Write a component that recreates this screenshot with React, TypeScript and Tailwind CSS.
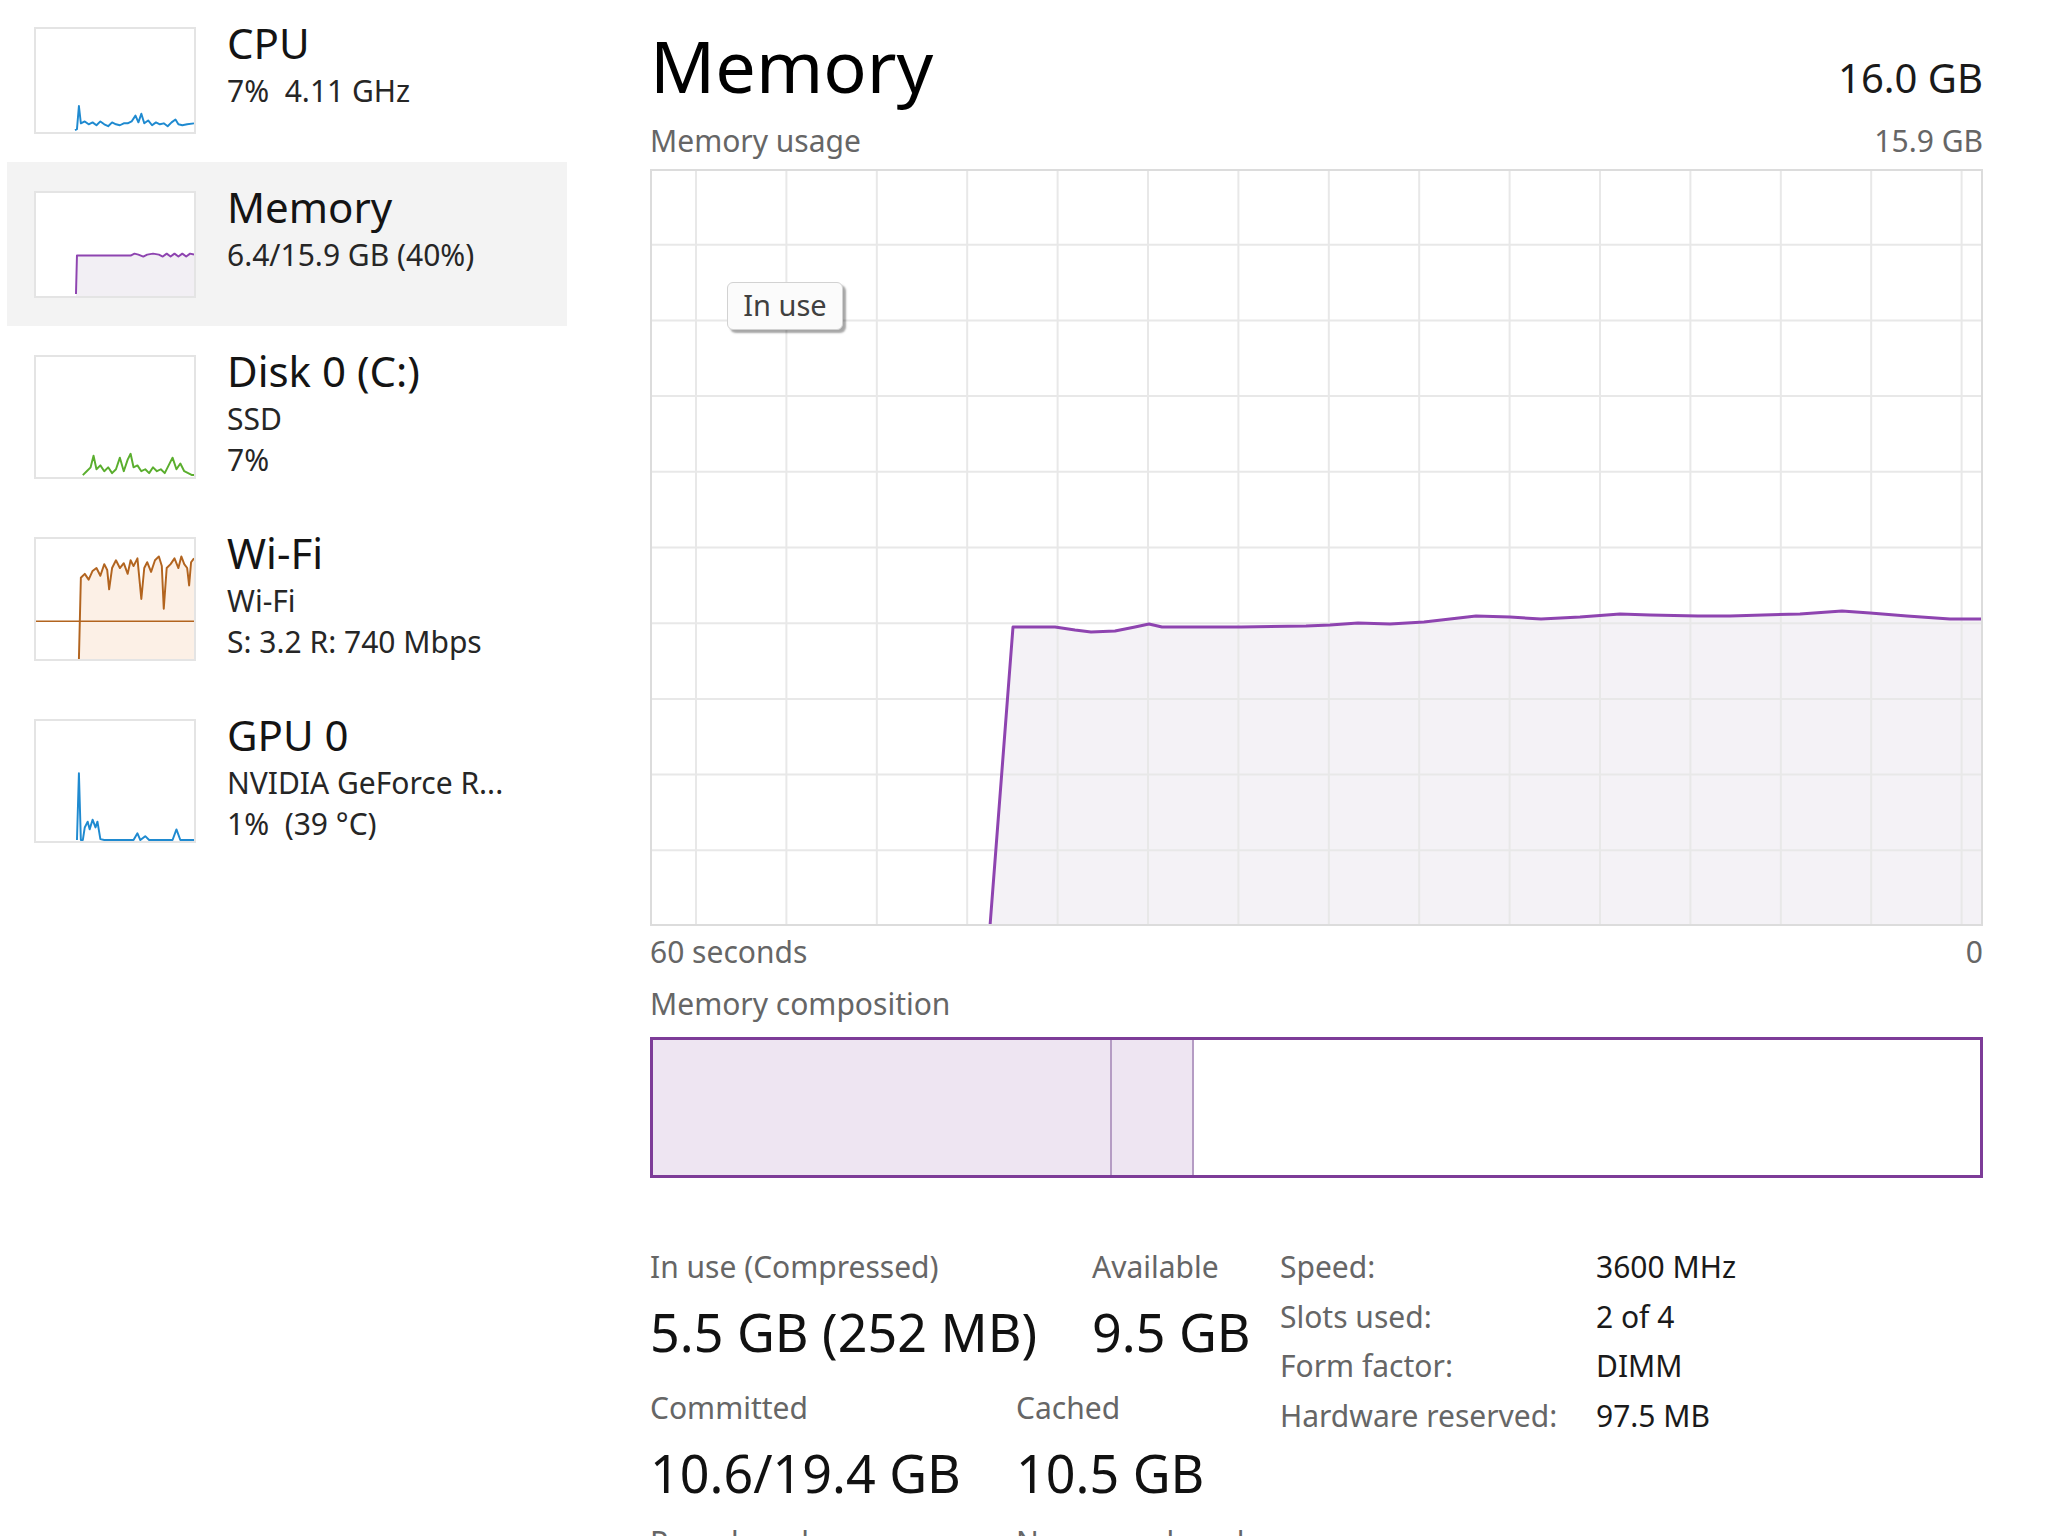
import React from 'react';

type Pt = [number, number];

const cpuPts: Pt[] = [
  [40, 105], [42, 104], [44, 80], [46, 98], [50, 96], [54, 99], [58, 97], [62, 100], [66, 96], [70, 99],
  [74, 101], [78, 97], [82, 99], [86, 100], [90, 98], [94, 98], [98, 96], [102, 90], [105, 97], [108, 88],
  [111, 98], [115, 95], [119, 100], [123, 97], [127, 99], [131, 98], [135, 101], [139, 97], [143, 94],
  [146, 99], [150, 100], [155, 99], [162, 98],
];

const memPts: Pt[] = [
  [41, 105], [42, 65], [97, 65], [101, 63], [105, 64], [110, 66], [114, 64], [120, 63], [126, 64], [130, 66],
  [134, 63], [138, 66], [142, 63], [146, 66], [150, 63], [154, 66], [158, 63], [162, 64],
];

const diskPts: Pt[] = [
  [48, 122], [52, 118], [56, 114], [59, 102], [62, 116], [66, 112], [70, 118], [74, 114], [78, 120], [82, 116],
  [86, 104], [90, 118], [94, 106], [97, 100], [100, 114], [104, 112], [108, 118], [112, 116], [116, 120],
  [120, 114], [124, 118], [128, 116], [132, 120], [136, 112], [140, 104], [144, 116], [148, 110], [152, 118],
  [156, 120], [160, 122], [162, 122],
];

const wifiPts: Pt[] = [
  [44, 124], [46, 40], [50, 36], [54, 42], [58, 33], [62, 30], [66, 38], [70, 26], [73, 32], [75, 52], [78, 30],
  [82, 22], [86, 30], [90, 25], [94, 36], [97, 22], [100, 28], [104, 20], [108, 62], [111, 30], [114, 24],
  [118, 34], [122, 22], [126, 18], [129, 28], [131, 72], [134, 30], [138, 26], [142, 20], [146, 30], [149, 18],
  [152, 26], [155, 30], [157, 48], [159, 24], [162, 20],
];

const gpuPts: Pt[] = [
  [42, 123], [44, 54], [46, 123], [48, 123], [50, 110], [53, 104], [55, 112], [58, 102], [61, 110], [63, 104],
  [66, 122], [70, 123], [100, 123], [104, 116], [107, 123], [112, 119], [116, 123], [140, 123], [144, 112],
  [148, 123], [162, 123],
];

const items = [
  { title: 'CPU', lines: ['7%  4.11 GHz'], tall: false, color: '#1f8ad0', fill: '', pts: cpuPts, hline: 0 },
  { title: 'Memory', lines: ['6.4/15.9 GB (40%)'], tall: false, color: '#8e44b0', fill: '#f2eff4', pts: memPts, hline: 0, selected: true },
  { title: 'Disk 0 (C:)', lines: ['SSD', '7%'], tall: true, color: '#5aae2e', fill: '', pts: diskPts, hline: 0 },
  { title: 'Wi-Fi', lines: ['Wi-Fi', 'S: 3.2 R: 740 Mbps'], tall: true, color: '#b2641f', fill: '#fcf0e6', pts: wifiPts, hline: 85 },
  { title: 'GPU 0', lines: ['NVIDIA GeForce R...', '1%  (39 °C)'], tall: true, color: '#1f8ad0', fill: '', pts: gpuPts, hline: 0 },
];

// main memory graph, in page coords
const usage: Pt[] = [
  [990, 926], [1013, 627], [1055, 627], [1075, 630], [1091, 632], [1115, 631], [1135, 627], [1149, 624],
  [1162, 627], [1175, 627], [1241, 627], [1306, 626], [1330, 625], [1358, 623], [1390, 624], [1424, 622],
  [1450, 619], [1476, 616], [1510, 617], [1541, 619], [1580, 617], [1620, 614], [1650, 615], [1698, 616],
  [1730, 616], [1763, 615], [1800, 614], [1842, 611], [1870, 613], [1907, 616], [1950, 619], [1983, 619],
];

function Thumb({ item }: { item: (typeof items)[number] }) {
  const h = item.tall ? 124 : 107;
  const line = item.pts.map(([x, y]) => `${x},${y}`).join(' ');
  const first = item.pts[0];
  const last = item.pts[item.pts.length - 1];
  const area = `M${first[0]},${h} L${line.split(' ').join(' L')} L${last[0]},${h} Z`;
  return (
    <div className={`${item.tall ? 'h-[124px]' : 'h-[107px]'} w-[162px] shrink-0 border-2 border-[#e4e4e4] bg-white`}>
      <svg className="block h-full w-full" viewBox={`0 0 162 ${h}`} preserveAspectRatio="none">
        {item.fill && <path d={area} fill={item.fill} />}
        {item.hline > 0 && <line x1="0" x2="162" y1={item.hline} y2={item.hline} stroke={item.color} strokeWidth="1.5" />}
        <polyline points={line} fill="none" stroke={item.color} strokeWidth="2" strokeLinejoin="round" />
      </svg>
    </div>
  );
}

function UsageChart() {
  const pts = usage.map(([x, y]) => [x - 650, y - 169]);
  const line = pts.map(([x, y]) => `${x},${y}`).join(' ');
  const area = `M${pts[0][0]},757 L${line.split(' ').join(' L')} L1333,757 Z`;
  return (
    <div className="relative mt-[13px] h-[757px] w-full">
      <svg className="block h-full w-full" viewBox="0 0 1333 757">
        <path d={area} fill="#f4f2f6" />
        {Array.from({ length: 9 }, (_, i) => (
          <line key={`h${i}`} x1="0" x2="1333" y1={75.7 * (i + 1)} y2={75.7 * (i + 1)} stroke="#e8e8e8" strokeWidth="2" />
        ))}
        {Array.from({ length: 15 }, (_, i) => (
          <line key={`v${i}`} x1={46 + 90.4 * i} x2={46 + 90.4 * i} y1="0" y2="757" stroke="#e8e8e8" strokeWidth="2" />
        ))}
        <polyline points={line} fill="none" stroke="#8e44b0" strokeWidth="3" strokeLinejoin="round" />
        <rect x="1" y="1" width="1331" height="755" fill="none" stroke="#dcdcdc" strokeWidth="2" />
      </svg>
      <div className="absolute left-[77px] top-[113px] flex h-[48px] w-[116px] items-center justify-center rounded-[6px] border border-[#d2d2d2] bg-[#fbfbfb] pb-[3px] text-[29px] leading-none text-[#404040] shadow-[3px_3px_2px_rgba(0,0,0,0.35)]">
        In use
      </div>
    </div>
  );
}

export default function App() {
  return (
    <div className="flex h-[1536px] w-[2048px] overflow-hidden bg-white font-['Noto_Sans',sans-serif] text-[#111]">
      <div className="-mt-[2px] w-[567px] shrink-0 pl-[7px]">
        {items.map((item) => (
          <div
            key={item.title}
            className={`flex items-start pb-[28px] pl-[27px] pt-[29px] ${item.selected ? 'bg-[#f3f3f3]' : ''}`}
          >
            <Thumb item={item} />
            <div className="-mt-[5px] ml-[31px]">
              <div className="text-[42px] leading-none text-[#141414]">{item.title}</div>
              <div className="mt-[6px] whitespace-pre text-[30px] leading-[41px] text-[#262626]">
                {item.lines.map((l) => (
                  <div key={l}>{l}</div>
                ))}
              </div>
            </div>
          </div>
        ))}
      </div>

      <div className="ml-[83px] w-[1333px] shrink-0 pt-[29px]">
        <div className="flex items-baseline justify-between">
          <div className="text-[72px] leading-none text-black">Memory</div>
          <div className="text-[40px] leading-none text-[#1a1a1a]">16.0 GB</div>
        </div>
        <div className="mt-[25px] flex justify-between text-[30px] leading-none text-[#666]">
          <span>Memory usage</span>
          <span>15.9 GB</span>
        </div>

        <UsageChart />

        <div className="mt-[11px] flex justify-between text-[30px] leading-none text-[#666]">
          <span>60 seconds</span>
          <span>0</span>
        </div>
        <div className="mt-[22px] text-[30px] leading-none text-[#666]">Memory composition</div>

        <div className="mt-[18px] flex h-[141px] border-[3px] border-[#7d3c98]">
          <div className="w-[459px] border-r-2 border-[#b59cc4] bg-[#eee5f2]" />
          <div className="w-[82px] border-r-2 border-[#b59cc4] bg-[#eee5f2]" />
          <div className="flex-1 bg-white" />
        </div>

        <div className="mt-[64px] flex items-start">
          <div className="w-[630px] pt-[10px]">
            <div className="flex">
              <div className="w-[442px]">
                <div className="text-[30px] leading-none text-[#666]">In use (Compressed)</div>
                <div className="mt-[24px] text-[52px] leading-none">5.5 GB (252 MB)</div>
              </div>
              <div>
                <div className="text-[30px] leading-none text-[#666]">Available</div>
                <div className="mt-[24px] text-[52px] leading-none">9.5 GB</div>
              </div>
            </div>
            <div className="mt-[35px] flex">
              <div className="w-[366px]">
                <div className="text-[30px] leading-none text-[#666]">Committed</div>
                <div className="mt-[24px] text-[52px] leading-none">10.6/19.4 GB</div>
              </div>
              <div>
                <div className="text-[30px] leading-none text-[#666]">Cached</div>
                <div className="mt-[24px] text-[52px] leading-none">10.5 GB</div>
              </div>
            </div>
            <div className="mt-[28px] flex text-[30px] leading-none text-[#666]">
              <div className="w-[366px]">Paged pool</div>
              <div>Non-paged pool</div>
            </div>
          </div>
          <div className="grid grid-cols-[316px_auto] content-start self-start text-[30px] leading-[49.6px]">
            <div className="text-[#666]">Speed:</div>
            <div className="text-[#1a1a1a]">3600 MHz</div>
            <div className="text-[#666]">Slots used:</div>
            <div className="text-[#1a1a1a]">2 of 4</div>
            <div className="text-[#666]">Form factor:</div>
            <div className="text-[#1a1a1a]">DIMM</div>
            <div className="text-[#666]">Hardware reserved:</div>
            <div className="text-[#1a1a1a]">97.5 MB</div>
          </div>
        </div>
      </div>
    </div>
  );
}
